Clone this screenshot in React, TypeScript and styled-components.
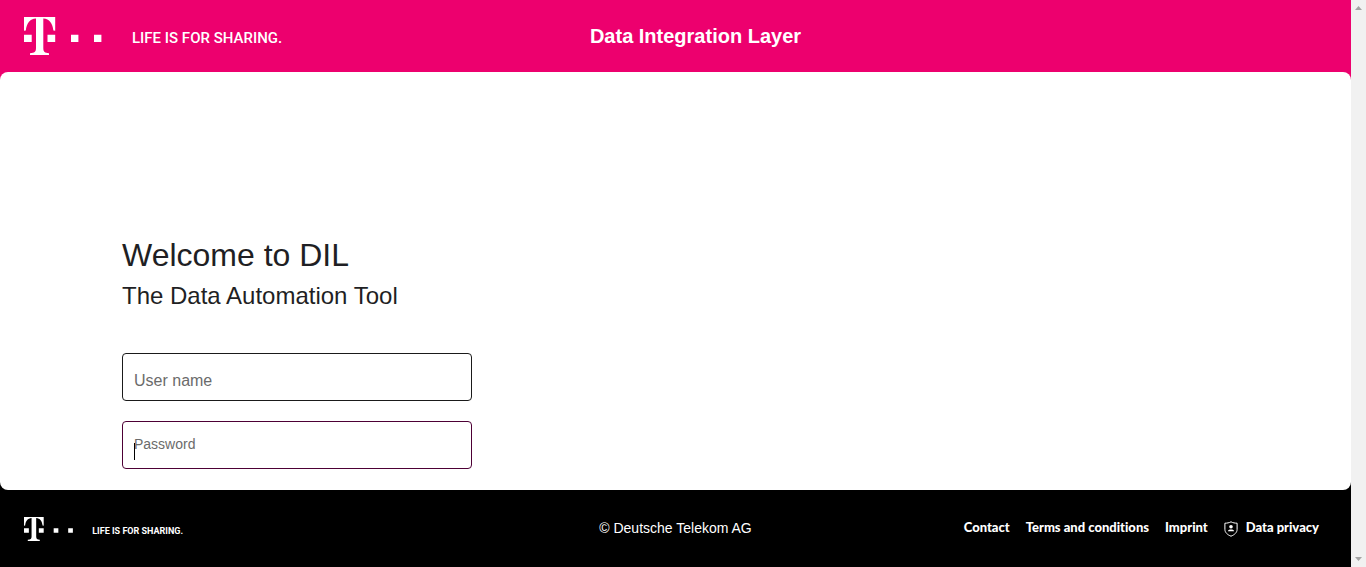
import React from 'react';
import styled, { createGlobalStyle } from 'styled-components';

const magenta = '#ed006e';
const sans = "'Liberation Sans', Arial, sans-serif";
const brand = "Roboto, 'Liberation Sans', sans-serif";
const linkFont = "Lato, 'Liberation Sans', sans-serif";

const GlobalStyle = createGlobalStyle`
  *, *::before, *::after { box-sizing: border-box; }
  body { margin: 0; font-family: ${sans}; color: #1f1f24; background: #fff; }
  h1, h2, p { margin: 0; font-weight: 400; }
`;

const Shell = styled.div`
  display: flex;
  min-height: 100vh;
`;

const Page = styled.div`
  flex: 1;
  min-width: 0;
  display: flex;
  flex-direction: column;
  background: linear-gradient(${magenta} 50%, #000 50%);
`;

const ScrollTrack = styled.div`
  width: 15px;
  padding: 6px 0;
  display: flex;
  flex-direction: column;
  justify-content: space-between;
  align-items: center;
  background: #f1f1f1;
`;

const Bar = styled.header`
  display: grid;
  grid-template-columns: 1fr auto 1fr;
  align-items: center;
  height: 72px;
  padding: 0 24px;
  color: #fff;
  background: ${magenta};
`;

const AppTitle = styled.p`
  padding-left: 40px;
  font-size: 20px;
  font-weight: 700;
  line-height: 24px;
`;

const Brand = styled.a<{ $small?: boolean }>`
  display: flex;
  align-items: center;
  gap: ${p => (p.$small ? 19 : 30)}px;
  color: #fff;
  text-decoration: none;
  font-family: ${brand};
  font-weight: ${p => (p.$small ? 700 : 500)};
  font-size: ${p => (p.$small ? 9 : 15)}px;
  line-height: ${p => (p.$small ? 12 : 18)}px;
  white-space: nowrap;

  svg { height: ${p => (p.$small ? 24 : 38)}px; width: auto; }
`;

const Tagline = styled.span`
  padding-top: 4px;
`;

const Main = styled.main`
  flex: 1;
  padding: 163px 24px 20px 122px;
  border-radius: 8px;
  background: #fff;
`;

const Heading = styled.h1`
  margin-bottom: 1px;
  font-size: 32px;
  line-height: 40px;
`;

const SubHeading = styled.h2`
  margin-bottom: 37px;
  font-size: 24px;
  line-height: 40px;
`;

const Form = styled.form`
  display: flex;
  flex-direction: column;
  gap: 20px;
  max-width: 350px;
`;

const Field = styled.div`
  position: relative;
`;

const Input = styled.input<{ $active?: boolean }>`
  display: block;
  width: 100%;
  height: 48px;
  padding: 12px 11px 0;
  border: 1px solid ${p => (p.$active ? '#4d0035' : '#1a1a1a')};
  border-radius: 4px;
  outline: none;
  background: #fff;
  font: 16px ${sans};
`;

const Label = styled.label<{ $active?: boolean }>`
  position: absolute;
  left: 12px;
  top: ${p => (p.$active ? 14 : 19)}px;
  color: #6b6b6b;
  font-size: ${p => (p.$active ? 14 : 16)}px;
  line-height: 18px;
  pointer-events: none;
`;

const Caret = styled.span`
  position: absolute;
  left: 12px;
  top: 22px;
  width: 1px;
  height: 17px;
  background: #000;
`;

const Footer = styled.footer`
  display: grid;
  grid-template-columns: 1fr auto 1fr;
  align-items: center;
  height: 77px;
  padding: 0 32px 0 24px;
  color: #fff;
  background: #000;
`;

const Copyright = styled.p`
  padding: 0 0 2px 8px;
  font-size: 14px;
  line-height: 20px;
`;

const Links = styled.nav`
  display: flex;
  justify-content: flex-end;
  align-items: center;
  gap: 16px;
`;

const FooterLink = styled.a`
  display: flex;
  align-items: center;
  gap: 8px;
  color: #fff;
  font: 900 13px/18px ${linkFont};
  font-variant-ligatures: none;
  text-decoration: none;
  white-space: nowrap;
`;

const LinkText = styled.span`
  padding-bottom: 3px;
`;

const Logo = () => (
  <svg viewBox="0 0 78 38" fill="#fff" aria-hidden="true">
    <path d="M0 0H31.200V13.800L29.400 13.600C28.600 6.500 25.500 2 19.300 1.600V31C19.300 35 20.800 36 25 36.200V38H6V36.200C10.500 36 12 35 12 31V1.600C5.700 2 2.600 6.500 1.800 13.600L0 13.800Z" />
    <path d="M0 17.700H7.700V25H0ZM23.500 17.700H31.200V25H23.500ZM47 17.700H54.400V25H47ZM70 17.700H77.400V25H70Z" />
  </svg>
);

const Shield = () => (
  <svg width="14" height="16" viewBox="0 0 14 16" fill="none" stroke="#fff" aria-hidden="true">
    <path d="M7 .8C5.200 1.800 3 2.200 .9 2.200V8.500C.9 11.500 3.500 13.800 7 15.200C10.500 13.800 13.100 11.500 13.100 8.500V2.200C11 2.200 8.800 1.800 7 .8Z" />
    <circle cx="7" cy="5.800" r="1.800" fill="#fff" stroke="none" />
    <path d="M3.900 10.300C3.900 8.900 5.200 8.400 7 8.400S10.100 8.900 10.100 10.300Z" fill="#fff" stroke="none" />
  </svg>
);

const Arrow = ({ down }: { down?: boolean }) => (
  <svg width="7" height="4" viewBox="0 0 7 4" fill="#a3a3a3" aria-hidden="true">
    <path d={down ? 'M0 0H7L3.500 4Z' : 'M0 4H7L3.500 0Z'} />
  </svg>
);

export default function App() {
  return (
    <Shell>
      <GlobalStyle />
      <Page>
        <Bar>
          <Brand href="#"><Logo /><Tagline>LIFE IS FOR SHARING.</Tagline></Brand>
          <AppTitle>Data Integration Layer</AppTitle>
        </Bar>
        <Main>
          <Heading>Welcome to DIL</Heading>
          <SubHeading>The Data Automation Tool</SubHeading>
          <Form>
            <Field>
              <Input id="username" type="text" />
              <Label htmlFor="username">User name</Label>
            </Field>
            <Field>
              <Input id="password" type="password" $active />
              <Label htmlFor="password" $active>Password</Label>
              <Caret />
            </Field>
          </Form>
        </Main>
        <Footer>
          <Brand href="#" $small><Logo /><Tagline>LIFE IS FOR SHARING.</Tagline></Brand>
          <Copyright>© Deutsche Telekom AG</Copyright>
          <Links>
            <FooterLink href="#"><LinkText>Contact</LinkText></FooterLink>
            <FooterLink href="#"><LinkText>Terms and conditions</LinkText></FooterLink>
            <FooterLink href="#"><LinkText>Imprint</LinkText></FooterLink>
            <FooterLink href="#"><Shield /><LinkText>Data privacy</LinkText></FooterLink>
          </Links>
        </Footer>
      </Page>
      <ScrollTrack aria-hidden="true"><Arrow /><Arrow down /></ScrollTrack>
    </Shell>
  );
}
